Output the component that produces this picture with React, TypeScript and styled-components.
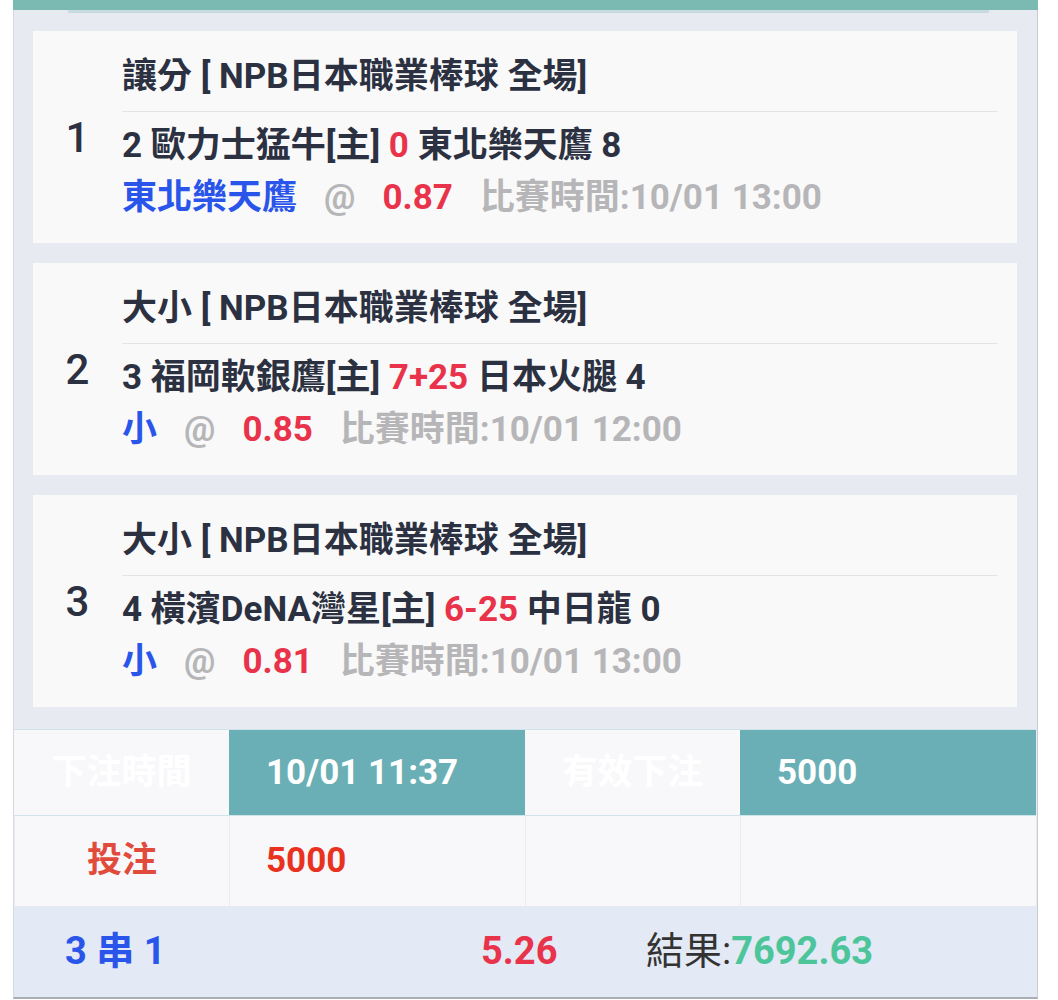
import React from "react";
import styled, { createGlobalStyle } from "styled-components";

const Global = createGlobalStyle`
  html, body { margin: 0; padding: 0; background: #ffffff; }
  body { font-family: Roboto, "Noto Sans CJK TC", "Noto Sans", sans-serif; }
  * { box-sizing: border-box; }
`;

const Page = styled.div`
  width: 1025px;
  margin-left: 13px;
  border-left: 1px solid #d6d9df;
  border-right: 1px solid #c9ccd3;
  border-bottom: 2px solid #a9adb5;
  background: #e8eaf1;
`;

const TopBar = styled.div`
  height: 10px;
  margin: 0 -1px;
  background: #7bbab3;
`;

const TopShade = styled.div`
  height: 3px;
  margin: 0 48px 0 54px;
  background: #c8dcdf;
`;

const CardList = styled.div`
  display: flex;
  flex-direction: column;
  gap: 20px;
  padding: 18px 20px 22px 19px;
`;

const Card = styled.div`
  display: flex;
  align-items: center;
  height: 212px;
  background: #f9f9f9;
`;

const Index = styled.div`
  width: 89px;
  flex: none;
  text-align: center;
  font-size: 42px;
  font-weight: 500;
  color: #2c3142;
`;

const Content = styled.div`
  flex: 1;
  padding-right: 20px;
`;

const Title = styled.div`
  height: 61px;
  line-height: 48px;
  padding-top: 2px;
  border-bottom: 1px solid #e3e4e8;
  font-size: 35px;
  font-weight: 700;
  color: #2c3142;
  white-space: nowrap;
`;

const Body = styled.div`
  padding-top: 8px;
`;

const Line = styled.div`
  height: 52px;
  line-height: 52px;
  font-size: 35px;
  font-weight: 700;
  color: #2c3142;
  white-space: pre;
`;

const Red = styled.span`
  color: #e8334a;
`;

const Pick = styled.span<{ $tone: "blue" | "gray" | "red" }>`
  margin-right: 27px;
  color: ${(p) =>
    p.$tone === "blue" ? "#2a55ea" : p.$tone === "red" ? "#e8334a" : "#b6b6b8"};
`;

const Table = styled.div`
  display: grid;
  grid-template-columns: 215px 296px 215px 296px;
  font-size: 35px;
  font-weight: 700;
`;

const HeadCell = styled.div<{ $accent?: boolean }>`
  height: 87px;
  line-height: 85px;
  text-align: ${(p) => (p.$accent ? "left" : "center")};
  padding-left: ${(p) => (p.$accent ? "37px" : "0")};
  background: ${(p) => (p.$accent ? "#6aafb5" : "#f8f8fa")};
  color: #ffffff;
  border-top: 1px solid #cfe3e8;
  border-bottom: 1px solid #cfe3e8;
`;

const BodyCell = styled.div<{ $center?: boolean; $tone?: string }>`
  height: 90px;
  line-height: 90px;
  text-align: ${(p) => (p.$center ? "center" : "left")};
  padding-left: ${(p) => (p.$center ? "0" : "36px")};
  background: #f8f8fa;
  color: ${(p) => p.$tone || "#2c3142"};
  border-left: 1px solid #ececf0;
  &:first-child {
    border-left: none;
  }
`;

const Summary = styled.div`
  display: grid;
  grid-template-columns: 416px 165px 1fr;
  height: 91px;
  line-height: 88px;
  padding-left: 51px;
  background: #e3e9f5;
  border-top: 1px solid #e6e8ee;
  font-size: 38px;
  font-weight: 700;
`;

const SummaryLabel = styled.div`
  color: #2a55ea;
  white-space: pre;
`;

const SummaryOdds = styled.div`
  color: #e8334a;
`;

const Result = styled.div`
  color: #333333;
  font-weight: 400;
  white-space: nowrap;
`;

const Green = styled.span`
  color: #4cc59a;
  font-weight: 700;
`;

type Bet = {
  no: number;
  title: string;
  home: string;
  line: string;
  away: string;
  pick: string;
  odds: string;
  time: string;
};

const bets: Bet[] = [
  {
    no: 1,
    title: "讓分 [ NPB日本職業棒球 全場]",
    home: "2 歐力士猛牛[主] ",
    line: "0",
    away: " 東北樂天鷹 8",
    pick: "東北樂天鷹",
    odds: "0.87",
    time: "比賽時間:10/01 13:00",
  },
  {
    no: 2,
    title: "大小 [ NPB日本職業棒球 全場]",
    home: "3 福岡軟銀鷹[主] ",
    line: "7+25",
    away: " 日本火腿 4",
    pick: "小",
    odds: "0.85",
    time: "比賽時間:10/01 12:00",
  },
  {
    no: 3,
    title: "大小 [ NPB日本職業棒球 全場]",
    home: "4 橫濱DeNA灣星[主] ",
    line: "6-25",
    away: " 中日龍 0",
    pick: "小",
    odds: "0.81",
    time: "比賽時間:10/01 13:00",
  },
];

export default function App() {
  return (
    <>
      <Global />
      <Page>
        <TopBar />
        <TopShade />
        <CardList>
          {bets.map((b) => (
            <Card key={b.no}>
              <Index>{b.no}</Index>
              <Content>
                <Title>{b.title}</Title>
                <Body>
                  <Line>
                    {b.home}
                    <Red>{b.line}</Red>
                    {b.away}
                  </Line>
                  <Line>
                    <Pick $tone="blue">{b.pick}</Pick>
                    <Pick $tone="gray">@</Pick>
                    <Pick $tone="red">{b.odds}</Pick>
                    <Pick $tone="gray">{b.time}</Pick>
                  </Line>
                </Body>
              </Content>
            </Card>
          ))}
        </CardList>
        <Table>
          <HeadCell>下注時間</HeadCell>
          <HeadCell $accent>10/01 11:37</HeadCell>
          <HeadCell>有效下注</HeadCell>
          <HeadCell $accent>5000</HeadCell>
          <BodyCell $center $tone="#e04b3c">投注</BodyCell>
          <BodyCell $tone="#e8321f">5000</BodyCell>
          <BodyCell />
          <BodyCell />
        </Table>
        <Summary>
          <SummaryLabel>3 串 1</SummaryLabel>
          <SummaryOdds>5.26</SummaryOdds>
          <Result>
            結果:<Green>7692.63</Green>
          </Result>
        </Summary>
      </Page>
    </>
  );
}
